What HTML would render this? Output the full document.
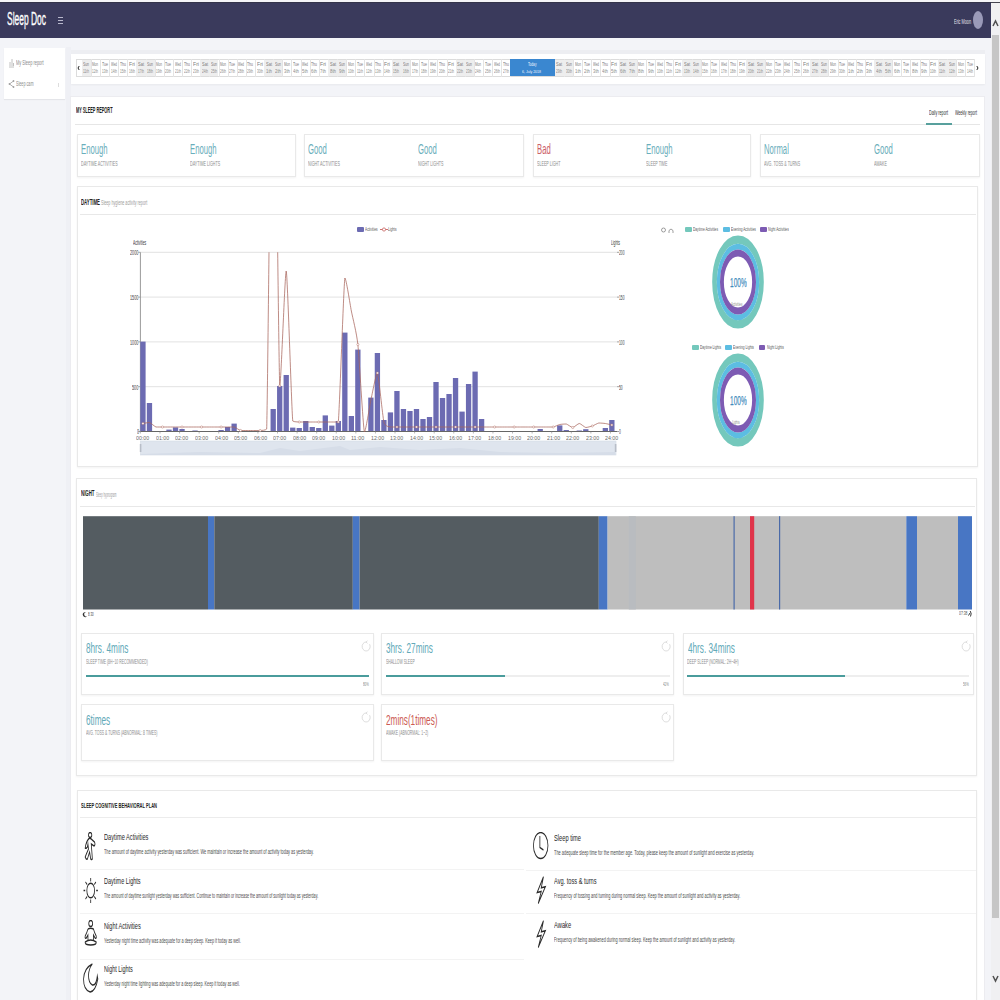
<!DOCTYPE html><html><head><meta charset="utf-8"><style>*{margin:0;padding:0}
html,body{width:1000px;height:1000px;overflow:hidden;background:#f3f4f8;font-family:"Liberation Sans",sans-serif}
.r{position:absolute}
.t{position:absolute;white-space:nowrap;line-height:1;transform-origin:0 0}
.card{position:absolute;background:#fff;border:1px solid #e9e9e9;box-sizing:border-box;box-shadow:0 1px 2px rgba(0,0,0,0.05)}
</style></head><body><div class="r" style="left:0px;top:0px;width:1000px;height:2px;background:#f4f4f7;"></div>
<div class="r" style="left:0px;top:2px;width:991px;height:36px;background:#3a3a5c;border-top:1px solid #34344a;box-sizing:border-box;"></div>
<div class="t" style="left:7.00px;top:8.76px;font-size:19.19px;color:#ffffff;font-weight:400;transform:scaleX(0.4405);-webkit-text-stroke:0.35px #fff;">Sleep Doc</div>
<div class="r" style="left:58px;top:16.5px;width:5px;height:1px;background:#b8b8cc;"></div>
<div class="r" style="left:58px;top:19.5px;width:5px;height:1px;background:#b8b8cc;"></div>
<div class="r" style="left:58px;top:22.5px;width:5px;height:1px;background:#b8b8cc;"></div>
<div class="t" style="left:954.00px;top:18.74px;font-size:6.69px;color:#e4e4ee;font-weight:400;transform:scaleX(0.5650);">Eric Moon</div>
<div class="r" style="left:973px;top:11px;width:10px;height:18px;border-radius:50%;background:#9a9ab8;"></div>
<div class="r" style="left:991px;top:2px;width:9px;height:998px;background:#f0f0f2;"></div>
<div class="r" style="left:991px;top:2px;width:9px;height:1px;background:#44444f;"></div>
<div class="r" style="left:992px;top:35px;width:7px;height:882.5px;background:#c6c6c6;"></div>
<svg class="r" style="left:991px;top:15.5px" width="9" height="14"><path d="M2 10 L4.5 5 L7 10" stroke="#505050" stroke-width="1.5" fill="none"/></svg>
<svg class="r" style="left:991px;top:972px" width="9" height="14"><path d="M2 4 L4.5 9 L7 4" stroke="#505050" stroke-width="1.5" fill="none"/></svg>
<div class="r" style="left:65.5px;top:47px;width:5px;height:953px;background:#eff0f5;"></div>
<div class="r" style="left:4px;top:48px;width:61px;height:51px;background:#ffffff;box-shadow:0 1px 1px rgba(0,0,0,0.06);"></div>
<svg class="r" style="left:8px;top:57px" width="7" height="11"><path d="M1 10 H6 M2 9 V5 M4 9 V2 M5.5 9 V6" stroke="#b0b0b0" stroke-width="0.8" fill="none"/></svg>
<div class="t" style="left:15.70px;top:59.25px;font-size:7.27px;color:#8a8a8a;font-weight:400;transform:scaleX(0.5399);">My Sleep report</div>
<svg class="r" style="left:8px;top:79px" width="7" height="10"><path d="M1.5 5 L5.5 2 M1.5 5 L5.5 8" stroke="#a0a0a0" stroke-width="0.8" fill="none"/><circle cx="1.5" cy="5" r="0.9" fill="#a0a0a0"/><circle cx="5.5" cy="2" r="0.9" fill="#a0a0a0"/><circle cx="5.5" cy="8" r="0.9" fill="#a0a0a0"/></svg>
<div class="t" style="left:16.10px;top:81.27px;font-size:7.12px;color:#8a8a8a;font-weight:400;transform:scaleX(0.5200);">Sleep cam</div>
<div class="r" style="left:58px;top:83px;width:1px;height:4px;background:#dddddd;"></div>
<div class="r" style="left:71px;top:49.5px;width:914px;height:4px;background:#edeef2;"></div>
<div class="r" style="left:71px;top:54px;width:914px;height:30px;background:#ffffff;box-shadow:0 1px 2px rgba(0,0,0,0.05);"></div>
<div class="r" style="left:76px;top:58.5px;width:898.5px;height:1px;background:#dcdcdc;"></div>
<div class="r" style="left:76px;top:75.5px;width:898.5px;height:1px;background:#dcdcdc;"></div>
<div class="r" style="left:76px;top:58.5px;width:1px;height:18.0px;background:#dcdcdc;"></div>
<div class="r" style="left:81.7px;top:58.5px;width:1px;height:18.0px;background:#dedede;"></div>
<div class="r" style="left:81.7px;top:59.5px;width:9.12px;height:16.0px;background:#eeeeee;"></div>
<div class="r" style="left:90.82px;top:58.5px;width:1px;height:18.0px;background:#e4e4e4;"></div>
<div class="t" style="left:83.30px;top:61.90px;font-size:5.67px;color:#7a7a7a;font-weight:400;transform:scaleX(0.5946);">Sun</div>
<div class="t" style="left:83.30px;top:69.17px;font-size:5.23px;color:#8a8a8a;font-weight:400;transform:scaleX(0.6132);">11th</div>
<div class="r" style="left:99.94px;top:58.5px;width:1px;height:18.0px;background:#e4e4e4;"></div>
<div class="t" style="left:92.42px;top:61.90px;font-size:5.67px;color:#7a7a7a;font-weight:400;transform:scaleX(0.5442);">Mon</div>
<div class="t" style="left:92.42px;top:69.17px;font-size:5.23px;color:#8a8a8a;font-weight:400;transform:scaleX(0.5895);">12th</div>
<div class="r" style="left:109.06px;top:58.5px;width:1px;height:18.0px;background:#e4e4e4;"></div>
<div class="t" style="left:101.54px;top:61.90px;font-size:5.67px;color:#7a7a7a;font-weight:400;transform:scaleX(0.6282);">Tue</div>
<div class="t" style="left:101.54px;top:69.17px;font-size:5.23px;color:#8a8a8a;font-weight:400;transform:scaleX(0.5895);">13th</div>
<div class="r" style="left:118.18px;top:58.5px;width:1px;height:18.0px;background:#e4e4e4;"></div>
<div class="t" style="left:110.66px;top:61.90px;font-size:5.67px;color:#7a7a7a;font-weight:400;transform:scaleX(0.5189);">Wed</div>
<div class="t" style="left:110.66px;top:69.17px;font-size:5.23px;color:#8a8a8a;font-weight:400;transform:scaleX(0.5895);">14th</div>
<div class="r" style="left:127.3px;top:58.5px;width:1px;height:18.0px;background:#e4e4e4;"></div>
<div class="t" style="left:119.78px;top:61.90px;font-size:5.67px;color:#7a7a7a;font-weight:400;transform:scaleX(0.6136);">Thu</div>
<div class="t" style="left:119.78px;top:69.17px;font-size:5.23px;color:#8a8a8a;font-weight:400;transform:scaleX(0.5895);">15th</div>
<div class="r" style="left:136.42px;top:58.5px;width:1px;height:18.0px;background:#e4e4e4;"></div>
<div class="t" style="left:128.90px;top:61.90px;font-size:5.67px;color:#7a7a7a;font-weight:400;transform:scaleX(0.9086);">Fri</div>
<div class="t" style="left:128.90px;top:69.17px;font-size:5.23px;color:#8a8a8a;font-weight:400;transform:scaleX(0.5895);">16th</div>
<div class="r" style="left:136.42px;top:59.5px;width:9.12px;height:16.0px;background:#eeeeee;"></div>
<div class="r" style="left:145.54px;top:58.5px;width:1px;height:18.0px;background:#e4e4e4;"></div>
<div class="t" style="left:138.02px;top:61.90px;font-size:5.67px;color:#7a7a7a;font-weight:400;transform:scaleX(0.7056);">Sat</div>
<div class="t" style="left:138.02px;top:69.17px;font-size:5.23px;color:#8a8a8a;font-weight:400;transform:scaleX(0.5895);">17th</div>
<div class="r" style="left:145.54px;top:59.5px;width:9.12px;height:16.0px;background:#eeeeee;"></div>
<div class="r" style="left:154.66px;top:58.5px;width:1px;height:18.0px;background:#e4e4e4;"></div>
<div class="t" style="left:147.14px;top:61.90px;font-size:5.67px;color:#7a7a7a;font-weight:400;transform:scaleX(0.5946);">Sun</div>
<div class="t" style="left:147.14px;top:69.17px;font-size:5.23px;color:#8a8a8a;font-weight:400;transform:scaleX(0.5895);">18th</div>
<div class="r" style="left:163.78px;top:58.5px;width:1px;height:18.0px;background:#e4e4e4;"></div>
<div class="t" style="left:156.26px;top:61.90px;font-size:5.67px;color:#7a7a7a;font-weight:400;transform:scaleX(0.5442);">Mon</div>
<div class="t" style="left:156.26px;top:69.17px;font-size:5.23px;color:#8a8a8a;font-weight:400;transform:scaleX(0.5895);">19th</div>
<div class="r" style="left:172.9px;top:58.5px;width:1px;height:18.0px;background:#e4e4e4;"></div>
<div class="t" style="left:165.38px;top:61.90px;font-size:5.67px;color:#7a7a7a;font-weight:400;transform:scaleX(0.6282);">Tue</div>
<div class="t" style="left:165.38px;top:69.17px;font-size:5.23px;color:#8a8a8a;font-weight:400;transform:scaleX(0.5895);">20th</div>
<div class="r" style="left:182.02px;top:58.5px;width:1px;height:18.0px;background:#e4e4e4;"></div>
<div class="t" style="left:174.50px;top:61.90px;font-size:5.67px;color:#7a7a7a;font-weight:400;transform:scaleX(0.5189);">Wed</div>
<div class="t" style="left:174.50px;top:69.17px;font-size:5.23px;color:#8a8a8a;font-weight:400;transform:scaleX(0.5895);">21th</div>
<div class="r" style="left:191.14px;top:58.5px;width:1px;height:18.0px;background:#e4e4e4;"></div>
<div class="t" style="left:183.62px;top:61.90px;font-size:5.67px;color:#7a7a7a;font-weight:400;transform:scaleX(0.6136);">Thu</div>
<div class="t" style="left:183.62px;top:69.17px;font-size:5.23px;color:#8a8a8a;font-weight:400;transform:scaleX(0.5895);">22th</div>
<div class="r" style="left:200.26px;top:58.5px;width:1px;height:18.0px;background:#e4e4e4;"></div>
<div class="t" style="left:192.74px;top:61.90px;font-size:5.67px;color:#7a7a7a;font-weight:400;transform:scaleX(0.9086);">Fri</div>
<div class="t" style="left:192.74px;top:69.17px;font-size:5.23px;color:#8a8a8a;font-weight:400;transform:scaleX(0.5895);">23th</div>
<div class="r" style="left:200.26px;top:59.5px;width:9.12px;height:16.0px;background:#eeeeee;"></div>
<div class="r" style="left:209.38px;top:58.5px;width:1px;height:18.0px;background:#e4e4e4;"></div>
<div class="t" style="left:201.86px;top:61.90px;font-size:5.67px;color:#7a7a7a;font-weight:400;transform:scaleX(0.7056);">Sat</div>
<div class="t" style="left:201.86px;top:69.17px;font-size:5.23px;color:#8a8a8a;font-weight:400;transform:scaleX(0.5895);">24th</div>
<div class="r" style="left:209.38px;top:59.5px;width:9.12px;height:16.0px;background:#eeeeee;"></div>
<div class="r" style="left:218.5px;top:58.5px;width:1px;height:18.0px;background:#e4e4e4;"></div>
<div class="t" style="left:210.98px;top:61.90px;font-size:5.67px;color:#7a7a7a;font-weight:400;transform:scaleX(0.5946);">Sun</div>
<div class="t" style="left:210.98px;top:69.17px;font-size:5.23px;color:#8a8a8a;font-weight:400;transform:scaleX(0.5895);">25th</div>
<div class="r" style="left:227.62px;top:58.5px;width:1px;height:18.0px;background:#e4e4e4;"></div>
<div class="t" style="left:220.10px;top:61.90px;font-size:5.67px;color:#7a7a7a;font-weight:400;transform:scaleX(0.5442);">Mon</div>
<div class="t" style="left:220.10px;top:69.17px;font-size:5.23px;color:#8a8a8a;font-weight:400;transform:scaleX(0.5895);">26th</div>
<div class="r" style="left:236.74px;top:58.5px;width:1px;height:18.0px;background:#e4e4e4;"></div>
<div class="t" style="left:229.22px;top:61.90px;font-size:5.67px;color:#7a7a7a;font-weight:400;transform:scaleX(0.6282);">Tue</div>
<div class="t" style="left:229.22px;top:69.17px;font-size:5.23px;color:#8a8a8a;font-weight:400;transform:scaleX(0.5895);">27th</div>
<div class="r" style="left:245.86px;top:58.5px;width:1px;height:18.0px;background:#e4e4e4;"></div>
<div class="t" style="left:238.34px;top:61.90px;font-size:5.67px;color:#7a7a7a;font-weight:400;transform:scaleX(0.5189);">Wed</div>
<div class="t" style="left:238.34px;top:69.17px;font-size:5.23px;color:#8a8a8a;font-weight:400;transform:scaleX(0.5895);">28th</div>
<div class="r" style="left:254.98px;top:58.5px;width:1px;height:18.0px;background:#e4e4e4;"></div>
<div class="t" style="left:247.46px;top:61.90px;font-size:5.67px;color:#7a7a7a;font-weight:400;transform:scaleX(0.6136);">Thu</div>
<div class="t" style="left:247.46px;top:69.17px;font-size:5.23px;color:#8a8a8a;font-weight:400;transform:scaleX(0.5895);">29th</div>
<div class="r" style="left:264.1px;top:58.5px;width:1px;height:18.0px;background:#e4e4e4;"></div>
<div class="t" style="left:256.58px;top:61.90px;font-size:5.67px;color:#7a7a7a;font-weight:400;transform:scaleX(0.9086);">Fri</div>
<div class="t" style="left:256.58px;top:69.17px;font-size:5.23px;color:#8a8a8a;font-weight:400;transform:scaleX(0.5895);">30th</div>
<div class="r" style="left:264.1px;top:59.5px;width:9.12px;height:16.0px;background:#eeeeee;"></div>
<div class="r" style="left:273.22px;top:58.5px;width:1px;height:18.0px;background:#e4e4e4;"></div>
<div class="t" style="left:265.70px;top:61.90px;font-size:5.67px;color:#7a7a7a;font-weight:400;transform:scaleX(0.7056);">Sat</div>
<div class="t" style="left:265.70px;top:69.17px;font-size:5.23px;color:#8a8a8a;font-weight:400;transform:scaleX(0.8249);">1th</div>
<div class="r" style="left:273.22px;top:59.5px;width:9.12px;height:16.0px;background:#eeeeee;"></div>
<div class="r" style="left:282.34px;top:58.5px;width:1px;height:18.0px;background:#e4e4e4;"></div>
<div class="t" style="left:274.82px;top:61.90px;font-size:5.67px;color:#7a7a7a;font-weight:400;transform:scaleX(0.5946);">Sun</div>
<div class="t" style="left:274.82px;top:69.17px;font-size:5.23px;color:#8a8a8a;font-weight:400;transform:scaleX(0.8249);">2th</div>
<div class="r" style="left:291.46px;top:58.5px;width:1px;height:18.0px;background:#e4e4e4;"></div>
<div class="t" style="left:283.94px;top:61.90px;font-size:5.67px;color:#7a7a7a;font-weight:400;transform:scaleX(0.5442);">Mon</div>
<div class="t" style="left:283.94px;top:69.17px;font-size:5.23px;color:#8a8a8a;font-weight:400;transform:scaleX(0.8249);">3th</div>
<div class="r" style="left:300.58px;top:58.5px;width:1px;height:18.0px;background:#e4e4e4;"></div>
<div class="t" style="left:293.06px;top:61.90px;font-size:5.67px;color:#7a7a7a;font-weight:400;transform:scaleX(0.6282);">Tue</div>
<div class="t" style="left:293.06px;top:69.17px;font-size:5.23px;color:#8a8a8a;font-weight:400;transform:scaleX(0.8249);">4th</div>
<div class="r" style="left:309.7px;top:58.5px;width:1px;height:18.0px;background:#e4e4e4;"></div>
<div class="t" style="left:302.18px;top:61.90px;font-size:5.67px;color:#7a7a7a;font-weight:400;transform:scaleX(0.5189);">Wed</div>
<div class="t" style="left:302.18px;top:69.17px;font-size:5.23px;color:#8a8a8a;font-weight:400;transform:scaleX(0.8249);">5th</div>
<div class="r" style="left:318.82px;top:58.5px;width:1px;height:18.0px;background:#e4e4e4;"></div>
<div class="t" style="left:311.30px;top:61.90px;font-size:5.67px;color:#7a7a7a;font-weight:400;transform:scaleX(0.6136);">Thu</div>
<div class="t" style="left:311.30px;top:69.17px;font-size:5.23px;color:#8a8a8a;font-weight:400;transform:scaleX(0.8249);">6th</div>
<div class="r" style="left:327.94px;top:58.5px;width:1px;height:18.0px;background:#e4e4e4;"></div>
<div class="t" style="left:320.42px;top:61.90px;font-size:5.67px;color:#7a7a7a;font-weight:400;transform:scaleX(0.9086);">Fri</div>
<div class="t" style="left:320.42px;top:69.17px;font-size:5.23px;color:#8a8a8a;font-weight:400;transform:scaleX(0.8249);">7th</div>
<div class="r" style="left:327.94px;top:59.5px;width:9.12px;height:16.0px;background:#eeeeee;"></div>
<div class="r" style="left:337.06px;top:58.5px;width:1px;height:18.0px;background:#e4e4e4;"></div>
<div class="t" style="left:329.54px;top:61.90px;font-size:5.67px;color:#7a7a7a;font-weight:400;transform:scaleX(0.7056);">Sat</div>
<div class="t" style="left:329.54px;top:69.17px;font-size:5.23px;color:#8a8a8a;font-weight:400;transform:scaleX(0.8249);">8th</div>
<div class="r" style="left:337.06px;top:59.5px;width:9.12px;height:16.0px;background:#eeeeee;"></div>
<div class="r" style="left:346.18px;top:58.5px;width:1px;height:18.0px;background:#e4e4e4;"></div>
<div class="t" style="left:338.66px;top:61.90px;font-size:5.67px;color:#7a7a7a;font-weight:400;transform:scaleX(0.5946);">Sun</div>
<div class="t" style="left:338.66px;top:69.17px;font-size:5.23px;color:#8a8a8a;font-weight:400;transform:scaleX(0.8249);">9th</div>
<div class="r" style="left:355.3px;top:58.5px;width:1px;height:18.0px;background:#e4e4e4;"></div>
<div class="t" style="left:347.78px;top:61.90px;font-size:5.67px;color:#7a7a7a;font-weight:400;transform:scaleX(0.5442);">Mon</div>
<div class="t" style="left:347.78px;top:69.17px;font-size:5.23px;color:#8a8a8a;font-weight:400;transform:scaleX(0.5895);">10th</div>
<div class="r" style="left:364.42px;top:58.5px;width:1px;height:18.0px;background:#e4e4e4;"></div>
<div class="t" style="left:356.90px;top:61.90px;font-size:5.67px;color:#7a7a7a;font-weight:400;transform:scaleX(0.6282);">Tue</div>
<div class="t" style="left:356.90px;top:69.17px;font-size:5.23px;color:#8a8a8a;font-weight:400;transform:scaleX(0.6132);">11th</div>
<div class="r" style="left:373.54px;top:58.5px;width:1px;height:18.0px;background:#e4e4e4;"></div>
<div class="t" style="left:366.02px;top:61.90px;font-size:5.67px;color:#7a7a7a;font-weight:400;transform:scaleX(0.5189);">Wed</div>
<div class="t" style="left:366.02px;top:69.17px;font-size:5.23px;color:#8a8a8a;font-weight:400;transform:scaleX(0.5895);">12th</div>
<div class="r" style="left:382.66px;top:58.5px;width:1px;height:18.0px;background:#e4e4e4;"></div>
<div class="t" style="left:375.14px;top:61.90px;font-size:5.67px;color:#7a7a7a;font-weight:400;transform:scaleX(0.6136);">Thu</div>
<div class="t" style="left:375.14px;top:69.17px;font-size:5.23px;color:#8a8a8a;font-weight:400;transform:scaleX(0.5895);">13th</div>
<div class="r" style="left:391.78px;top:58.5px;width:1px;height:18.0px;background:#e4e4e4;"></div>
<div class="t" style="left:384.26px;top:61.90px;font-size:5.67px;color:#7a7a7a;font-weight:400;transform:scaleX(0.9086);">Fri</div>
<div class="t" style="left:384.26px;top:69.17px;font-size:5.23px;color:#8a8a8a;font-weight:400;transform:scaleX(0.5895);">14th</div>
<div class="r" style="left:391.78px;top:59.5px;width:9.12px;height:16.0px;background:#eeeeee;"></div>
<div class="r" style="left:400.9px;top:58.5px;width:1px;height:18.0px;background:#e4e4e4;"></div>
<div class="t" style="left:393.38px;top:61.90px;font-size:5.67px;color:#7a7a7a;font-weight:400;transform:scaleX(0.7056);">Sat</div>
<div class="t" style="left:393.38px;top:69.17px;font-size:5.23px;color:#8a8a8a;font-weight:400;transform:scaleX(0.5895);">15th</div>
<div class="r" style="left:400.9px;top:59.5px;width:9.12px;height:16.0px;background:#eeeeee;"></div>
<div class="r" style="left:410.02px;top:58.5px;width:1px;height:18.0px;background:#e4e4e4;"></div>
<div class="t" style="left:402.50px;top:61.90px;font-size:5.67px;color:#7a7a7a;font-weight:400;transform:scaleX(0.5946);">Sun</div>
<div class="t" style="left:402.50px;top:69.17px;font-size:5.23px;color:#8a8a8a;font-weight:400;transform:scaleX(0.5895);">16th</div>
<div class="r" style="left:419.14px;top:58.5px;width:1px;height:18.0px;background:#e4e4e4;"></div>
<div class="t" style="left:411.62px;top:61.90px;font-size:5.67px;color:#7a7a7a;font-weight:400;transform:scaleX(0.5442);">Mon</div>
<div class="t" style="left:411.62px;top:69.17px;font-size:5.23px;color:#8a8a8a;font-weight:400;transform:scaleX(0.5895);">17th</div>
<div class="r" style="left:428.26px;top:58.5px;width:1px;height:18.0px;background:#e4e4e4;"></div>
<div class="t" style="left:420.74px;top:61.90px;font-size:5.67px;color:#7a7a7a;font-weight:400;transform:scaleX(0.6282);">Tue</div>
<div class="t" style="left:420.74px;top:69.17px;font-size:5.23px;color:#8a8a8a;font-weight:400;transform:scaleX(0.5895);">18th</div>
<div class="r" style="left:437.38px;top:58.5px;width:1px;height:18.0px;background:#e4e4e4;"></div>
<div class="t" style="left:429.86px;top:61.90px;font-size:5.67px;color:#7a7a7a;font-weight:400;transform:scaleX(0.5189);">Wed</div>
<div class="t" style="left:429.86px;top:69.17px;font-size:5.23px;color:#8a8a8a;font-weight:400;transform:scaleX(0.5895);">19th</div>
<div class="r" style="left:446.5px;top:58.5px;width:1px;height:18.0px;background:#e4e4e4;"></div>
<div class="t" style="left:438.98px;top:61.90px;font-size:5.67px;color:#7a7a7a;font-weight:400;transform:scaleX(0.6136);">Thu</div>
<div class="t" style="left:438.98px;top:69.17px;font-size:5.23px;color:#8a8a8a;font-weight:400;transform:scaleX(0.5895);">20th</div>
<div class="r" style="left:455.62px;top:58.5px;width:1px;height:18.0px;background:#e4e4e4;"></div>
<div class="t" style="left:448.10px;top:61.90px;font-size:5.67px;color:#7a7a7a;font-weight:400;transform:scaleX(0.9086);">Fri</div>
<div class="t" style="left:448.10px;top:69.17px;font-size:5.23px;color:#8a8a8a;font-weight:400;transform:scaleX(0.5895);">21th</div>
<div class="r" style="left:455.62px;top:59.5px;width:9.12px;height:16.0px;background:#eeeeee;"></div>
<div class="r" style="left:464.74px;top:58.5px;width:1px;height:18.0px;background:#e4e4e4;"></div>
<div class="t" style="left:457.22px;top:61.90px;font-size:5.67px;color:#7a7a7a;font-weight:400;transform:scaleX(0.7056);">Sat</div>
<div class="t" style="left:457.22px;top:69.17px;font-size:5.23px;color:#8a8a8a;font-weight:400;transform:scaleX(0.5895);">22th</div>
<div class="r" style="left:464.74px;top:59.5px;width:9.12px;height:16.0px;background:#eeeeee;"></div>
<div class="r" style="left:473.86px;top:58.5px;width:1px;height:18.0px;background:#e4e4e4;"></div>
<div class="t" style="left:466.34px;top:61.90px;font-size:5.67px;color:#7a7a7a;font-weight:400;transform:scaleX(0.5946);">Sun</div>
<div class="t" style="left:466.34px;top:69.17px;font-size:5.23px;color:#8a8a8a;font-weight:400;transform:scaleX(0.5895);">23th</div>
<div class="r" style="left:482.98px;top:58.5px;width:1px;height:18.0px;background:#e4e4e4;"></div>
<div class="t" style="left:475.46px;top:61.90px;font-size:5.67px;color:#7a7a7a;font-weight:400;transform:scaleX(0.5442);">Mon</div>
<div class="t" style="left:475.46px;top:69.17px;font-size:5.23px;color:#8a8a8a;font-weight:400;transform:scaleX(0.5895);">24th</div>
<div class="r" style="left:492.1px;top:58.5px;width:1px;height:18.0px;background:#e4e4e4;"></div>
<div class="t" style="left:484.58px;top:61.90px;font-size:5.67px;color:#7a7a7a;font-weight:400;transform:scaleX(0.6282);">Tue</div>
<div class="t" style="left:484.58px;top:69.17px;font-size:5.23px;color:#8a8a8a;font-weight:400;transform:scaleX(0.5895);">25th</div>
<div class="r" style="left:501.22px;top:58.5px;width:1px;height:18.0px;background:#e4e4e4;"></div>
<div class="t" style="left:493.70px;top:61.90px;font-size:5.67px;color:#7a7a7a;font-weight:400;transform:scaleX(0.5189);">Wed</div>
<div class="t" style="left:493.70px;top:69.17px;font-size:5.23px;color:#8a8a8a;font-weight:400;transform:scaleX(0.5895);">26th</div>
<div class="r" style="left:510.34px;top:58.5px;width:1px;height:18.0px;background:#e4e4e4;"></div>
<div class="t" style="left:502.82px;top:61.90px;font-size:5.67px;color:#7a7a7a;font-weight:400;transform:scaleX(0.6136);">Thu</div>
<div class="t" style="left:502.82px;top:69.17px;font-size:5.23px;color:#8a8a8a;font-weight:400;transform:scaleX(0.5895);">27th</div>
<svg class="r" style="left:76px;top:65px" width="5" height="6"><path d="M3.2 1 L2 3 L3.2 5" fill="none" stroke="#222" stroke-width="1"/></svg>
<div class="r" style="left:510px;top:59px;width:44.8px;height:17px;background:#3a87d0;"></div>
<div class="t" style="left:528.00px;top:62.66px;font-size:4.65px;color:#f0f6ff;font-weight:400;transform:scaleX(0.6845);">Today</div>
<div class="t" style="left:522.00px;top:69.71px;font-size:4.36px;color:#f0f6ff;font-weight:400;transform:scaleX(0.8077);">6, July 2018</div>
<div class="r" style="left:554.8px;top:59.5px;width:9.12px;height:16.0px;background:#eeeeee;"></div>
<div class="r" style="left:563.92px;top:58.5px;width:1px;height:18.0px;background:#e4e4e4;"></div>
<div class="t" style="left:556.40px;top:61.90px;font-size:5.67px;color:#7a7a7a;font-weight:400;transform:scaleX(0.7056);">Sat</div>
<div class="t" style="left:556.40px;top:69.17px;font-size:5.23px;color:#8a8a8a;font-weight:400;transform:scaleX(0.5895);">29th</div>
<div class="r" style="left:563.92px;top:59.5px;width:9.12px;height:16.0px;background:#eeeeee;"></div>
<div class="r" style="left:573.04px;top:58.5px;width:1px;height:18.0px;background:#e4e4e4;"></div>
<div class="t" style="left:565.52px;top:61.90px;font-size:5.67px;color:#7a7a7a;font-weight:400;transform:scaleX(0.5946);">Sun</div>
<div class="t" style="left:565.52px;top:69.17px;font-size:5.23px;color:#8a8a8a;font-weight:400;transform:scaleX(0.5895);">30th</div>
<div class="r" style="left:582.16px;top:58.5px;width:1px;height:18.0px;background:#e4e4e4;"></div>
<div class="t" style="left:574.64px;top:61.90px;font-size:5.67px;color:#7a7a7a;font-weight:400;transform:scaleX(0.5442);">Mon</div>
<div class="t" style="left:574.64px;top:69.17px;font-size:5.23px;color:#8a8a8a;font-weight:400;transform:scaleX(0.8249);">1th</div>
<div class="r" style="left:591.28px;top:58.5px;width:1px;height:18.0px;background:#e4e4e4;"></div>
<div class="t" style="left:583.76px;top:61.90px;font-size:5.67px;color:#7a7a7a;font-weight:400;transform:scaleX(0.6282);">Tue</div>
<div class="t" style="left:583.76px;top:69.17px;font-size:5.23px;color:#8a8a8a;font-weight:400;transform:scaleX(0.8249);">2th</div>
<div class="r" style="left:600.4px;top:58.5px;width:1px;height:18.0px;background:#e4e4e4;"></div>
<div class="t" style="left:592.88px;top:61.90px;font-size:5.67px;color:#7a7a7a;font-weight:400;transform:scaleX(0.5189);">Wed</div>
<div class="t" style="left:592.88px;top:69.17px;font-size:5.23px;color:#8a8a8a;font-weight:400;transform:scaleX(0.8249);">3th</div>
<div class="r" style="left:609.52px;top:58.5px;width:1px;height:18.0px;background:#e4e4e4;"></div>
<div class="t" style="left:602.00px;top:61.90px;font-size:5.67px;color:#7a7a7a;font-weight:400;transform:scaleX(0.6136);">Thu</div>
<div class="t" style="left:602.00px;top:69.17px;font-size:5.23px;color:#8a8a8a;font-weight:400;transform:scaleX(0.8249);">4th</div>
<div class="r" style="left:618.64px;top:58.5px;width:1px;height:18.0px;background:#e4e4e4;"></div>
<div class="t" style="left:611.12px;top:61.90px;font-size:5.67px;color:#7a7a7a;font-weight:400;transform:scaleX(0.9086);">Fri</div>
<div class="t" style="left:611.12px;top:69.17px;font-size:5.23px;color:#8a8a8a;font-weight:400;transform:scaleX(0.8249);">5th</div>
<div class="r" style="left:618.64px;top:59.5px;width:9.12px;height:16.0px;background:#eeeeee;"></div>
<div class="r" style="left:627.76px;top:58.5px;width:1px;height:18.0px;background:#e4e4e4;"></div>
<div class="t" style="left:620.24px;top:61.90px;font-size:5.67px;color:#7a7a7a;font-weight:400;transform:scaleX(0.7056);">Sat</div>
<div class="t" style="left:620.24px;top:69.17px;font-size:5.23px;color:#8a8a8a;font-weight:400;transform:scaleX(0.8249);">6th</div>
<div class="r" style="left:627.76px;top:59.5px;width:9.12px;height:16.0px;background:#eeeeee;"></div>
<div class="r" style="left:636.88px;top:58.5px;width:1px;height:18.0px;background:#e4e4e4;"></div>
<div class="t" style="left:629.36px;top:61.90px;font-size:5.67px;color:#7a7a7a;font-weight:400;transform:scaleX(0.5946);">Sun</div>
<div class="t" style="left:629.36px;top:69.17px;font-size:5.23px;color:#8a8a8a;font-weight:400;transform:scaleX(0.8249);">7th</div>
<div class="r" style="left:646.0px;top:58.5px;width:1px;height:18.0px;background:#e4e4e4;"></div>
<div class="t" style="left:638.48px;top:61.90px;font-size:5.67px;color:#7a7a7a;font-weight:400;transform:scaleX(0.5442);">Mon</div>
<div class="t" style="left:638.48px;top:69.17px;font-size:5.23px;color:#8a8a8a;font-weight:400;transform:scaleX(0.8249);">8th</div>
<div class="r" style="left:655.12px;top:58.5px;width:1px;height:18.0px;background:#e4e4e4;"></div>
<div class="t" style="left:647.60px;top:61.90px;font-size:5.67px;color:#7a7a7a;font-weight:400;transform:scaleX(0.6282);">Tue</div>
<div class="t" style="left:647.60px;top:69.17px;font-size:5.23px;color:#8a8a8a;font-weight:400;transform:scaleX(0.8249);">9th</div>
<div class="r" style="left:664.24px;top:58.5px;width:1px;height:18.0px;background:#e4e4e4;"></div>
<div class="t" style="left:656.72px;top:61.90px;font-size:5.67px;color:#7a7a7a;font-weight:400;transform:scaleX(0.5189);">Wed</div>
<div class="t" style="left:656.72px;top:69.17px;font-size:5.23px;color:#8a8a8a;font-weight:400;transform:scaleX(0.5895);">10th</div>
<div class="r" style="left:673.36px;top:58.5px;width:1px;height:18.0px;background:#e4e4e4;"></div>
<div class="t" style="left:665.84px;top:61.90px;font-size:5.67px;color:#7a7a7a;font-weight:400;transform:scaleX(0.6136);">Thu</div>
<div class="t" style="left:665.84px;top:69.17px;font-size:5.23px;color:#8a8a8a;font-weight:400;transform:scaleX(0.6132);">11th</div>
<div class="r" style="left:682.48px;top:58.5px;width:1px;height:18.0px;background:#e4e4e4;"></div>
<div class="t" style="left:674.96px;top:61.90px;font-size:5.67px;color:#7a7a7a;font-weight:400;transform:scaleX(0.9086);">Fri</div>
<div class="t" style="left:674.96px;top:69.17px;font-size:5.23px;color:#8a8a8a;font-weight:400;transform:scaleX(0.5895);">12th</div>
<div class="r" style="left:682.48px;top:59.5px;width:9.12px;height:16.0px;background:#eeeeee;"></div>
<div class="r" style="left:691.6px;top:58.5px;width:1px;height:18.0px;background:#e4e4e4;"></div>
<div class="t" style="left:684.08px;top:61.90px;font-size:5.67px;color:#7a7a7a;font-weight:400;transform:scaleX(0.7056);">Sat</div>
<div class="t" style="left:684.08px;top:69.17px;font-size:5.23px;color:#8a8a8a;font-weight:400;transform:scaleX(0.5895);">13th</div>
<div class="r" style="left:691.6px;top:59.5px;width:9.12px;height:16.0px;background:#eeeeee;"></div>
<div class="r" style="left:700.72px;top:58.5px;width:1px;height:18.0px;background:#e4e4e4;"></div>
<div class="t" style="left:693.20px;top:61.90px;font-size:5.67px;color:#7a7a7a;font-weight:400;transform:scaleX(0.5946);">Sun</div>
<div class="t" style="left:693.20px;top:69.17px;font-size:5.23px;color:#8a8a8a;font-weight:400;transform:scaleX(0.5895);">14th</div>
<div class="r" style="left:709.84px;top:58.5px;width:1px;height:18.0px;background:#e4e4e4;"></div>
<div class="t" style="left:702.32px;top:61.90px;font-size:5.67px;color:#7a7a7a;font-weight:400;transform:scaleX(0.5442);">Mon</div>
<div class="t" style="left:702.32px;top:69.17px;font-size:5.23px;color:#8a8a8a;font-weight:400;transform:scaleX(0.5895);">15th</div>
<div class="r" style="left:718.96px;top:58.5px;width:1px;height:18.0px;background:#e4e4e4;"></div>
<div class="t" style="left:711.44px;top:61.90px;font-size:5.67px;color:#7a7a7a;font-weight:400;transform:scaleX(0.6282);">Tue</div>
<div class="t" style="left:711.44px;top:69.17px;font-size:5.23px;color:#8a8a8a;font-weight:400;transform:scaleX(0.5895);">16th</div>
<div class="r" style="left:728.08px;top:58.5px;width:1px;height:18.0px;background:#e4e4e4;"></div>
<div class="t" style="left:720.56px;top:61.90px;font-size:5.67px;color:#7a7a7a;font-weight:400;transform:scaleX(0.5189);">Wed</div>
<div class="t" style="left:720.56px;top:69.17px;font-size:5.23px;color:#8a8a8a;font-weight:400;transform:scaleX(0.5895);">17th</div>
<div class="r" style="left:737.2px;top:58.5px;width:1px;height:18.0px;background:#e4e4e4;"></div>
<div class="t" style="left:729.68px;top:61.90px;font-size:5.67px;color:#7a7a7a;font-weight:400;transform:scaleX(0.6136);">Thu</div>
<div class="t" style="left:729.68px;top:69.17px;font-size:5.23px;color:#8a8a8a;font-weight:400;transform:scaleX(0.5895);">18th</div>
<div class="r" style="left:746.32px;top:58.5px;width:1px;height:18.0px;background:#e4e4e4;"></div>
<div class="t" style="left:738.80px;top:61.90px;font-size:5.67px;color:#7a7a7a;font-weight:400;transform:scaleX(0.9086);">Fri</div>
<div class="t" style="left:738.80px;top:69.17px;font-size:5.23px;color:#8a8a8a;font-weight:400;transform:scaleX(0.5895);">19th</div>
<div class="r" style="left:746.32px;top:59.5px;width:9.12px;height:16.0px;background:#eeeeee;"></div>
<div class="r" style="left:755.44px;top:58.5px;width:1px;height:18.0px;background:#e4e4e4;"></div>
<div class="t" style="left:747.92px;top:61.90px;font-size:5.67px;color:#7a7a7a;font-weight:400;transform:scaleX(0.7056);">Sat</div>
<div class="t" style="left:747.92px;top:69.17px;font-size:5.23px;color:#8a8a8a;font-weight:400;transform:scaleX(0.5895);">20th</div>
<div class="r" style="left:755.44px;top:59.5px;width:9.12px;height:16.0px;background:#eeeeee;"></div>
<div class="r" style="left:764.56px;top:58.5px;width:1px;height:18.0px;background:#e4e4e4;"></div>
<div class="t" style="left:757.04px;top:61.90px;font-size:5.67px;color:#7a7a7a;font-weight:400;transform:scaleX(0.5946);">Sun</div>
<div class="t" style="left:757.04px;top:69.17px;font-size:5.23px;color:#8a8a8a;font-weight:400;transform:scaleX(0.5895);">21th</div>
<div class="r" style="left:773.68px;top:58.5px;width:1px;height:18.0px;background:#e4e4e4;"></div>
<div class="t" style="left:766.16px;top:61.90px;font-size:5.67px;color:#7a7a7a;font-weight:400;transform:scaleX(0.5442);">Mon</div>
<div class="t" style="left:766.16px;top:69.17px;font-size:5.23px;color:#8a8a8a;font-weight:400;transform:scaleX(0.5895);">22th</div>
<div class="r" style="left:782.8px;top:58.5px;width:1px;height:18.0px;background:#e4e4e4;"></div>
<div class="t" style="left:775.28px;top:61.90px;font-size:5.67px;color:#7a7a7a;font-weight:400;transform:scaleX(0.6282);">Tue</div>
<div class="t" style="left:775.28px;top:69.17px;font-size:5.23px;color:#8a8a8a;font-weight:400;transform:scaleX(0.5895);">23th</div>
<div class="r" style="left:791.92px;top:58.5px;width:1px;height:18.0px;background:#e4e4e4;"></div>
<div class="t" style="left:784.40px;top:61.90px;font-size:5.67px;color:#7a7a7a;font-weight:400;transform:scaleX(0.5189);">Wed</div>
<div class="t" style="left:784.40px;top:69.17px;font-size:5.23px;color:#8a8a8a;font-weight:400;transform:scaleX(0.5895);">24th</div>
<div class="r" style="left:801.04px;top:58.5px;width:1px;height:18.0px;background:#e4e4e4;"></div>
<div class="t" style="left:793.52px;top:61.90px;font-size:5.67px;color:#7a7a7a;font-weight:400;transform:scaleX(0.6136);">Thu</div>
<div class="t" style="left:793.52px;top:69.17px;font-size:5.23px;color:#8a8a8a;font-weight:400;transform:scaleX(0.5895);">25th</div>
<div class="r" style="left:810.16px;top:58.5px;width:1px;height:18.0px;background:#e4e4e4;"></div>
<div class="t" style="left:802.64px;top:61.90px;font-size:5.67px;color:#7a7a7a;font-weight:400;transform:scaleX(0.9086);">Fri</div>
<div class="t" style="left:802.64px;top:69.17px;font-size:5.23px;color:#8a8a8a;font-weight:400;transform:scaleX(0.5895);">26th</div>
<div class="r" style="left:810.16px;top:59.5px;width:9.12px;height:16.0px;background:#eeeeee;"></div>
<div class="r" style="left:819.28px;top:58.5px;width:1px;height:18.0px;background:#e4e4e4;"></div>
<div class="t" style="left:811.76px;top:61.90px;font-size:5.67px;color:#7a7a7a;font-weight:400;transform:scaleX(0.7056);">Sat</div>
<div class="t" style="left:811.76px;top:69.17px;font-size:5.23px;color:#8a8a8a;font-weight:400;transform:scaleX(0.5895);">27th</div>
<div class="r" style="left:819.28px;top:59.5px;width:9.12px;height:16.0px;background:#eeeeee;"></div>
<div class="r" style="left:828.4px;top:58.5px;width:1px;height:18.0px;background:#e4e4e4;"></div>
<div class="t" style="left:820.88px;top:61.90px;font-size:5.67px;color:#7a7a7a;font-weight:400;transform:scaleX(0.5946);">Sun</div>
<div class="t" style="left:820.88px;top:69.17px;font-size:5.23px;color:#8a8a8a;font-weight:400;transform:scaleX(0.5895);">28th</div>
<div class="r" style="left:837.52px;top:58.5px;width:1px;height:18.0px;background:#e4e4e4;"></div>
<div class="t" style="left:830.00px;top:61.90px;font-size:5.67px;color:#7a7a7a;font-weight:400;transform:scaleX(0.5442);">Mon</div>
<div class="t" style="left:830.00px;top:69.17px;font-size:5.23px;color:#8a8a8a;font-weight:400;transform:scaleX(0.5895);">29th</div>
<div class="r" style="left:846.64px;top:58.5px;width:1px;height:18.0px;background:#e4e4e4;"></div>
<div class="t" style="left:839.12px;top:61.90px;font-size:5.67px;color:#7a7a7a;font-weight:400;transform:scaleX(0.6282);">Tue</div>
<div class="t" style="left:839.12px;top:69.17px;font-size:5.23px;color:#8a8a8a;font-weight:400;transform:scaleX(0.5895);">30th</div>
<div class="r" style="left:855.76px;top:58.5px;width:1px;height:18.0px;background:#e4e4e4;"></div>
<div class="t" style="left:848.24px;top:61.90px;font-size:5.67px;color:#7a7a7a;font-weight:400;transform:scaleX(0.5189);">Wed</div>
<div class="t" style="left:848.24px;top:69.17px;font-size:5.23px;color:#8a8a8a;font-weight:400;transform:scaleX(0.8249);">1th</div>
<div class="r" style="left:864.88px;top:58.5px;width:1px;height:18.0px;background:#e4e4e4;"></div>
<div class="t" style="left:857.36px;top:61.90px;font-size:5.67px;color:#7a7a7a;font-weight:400;transform:scaleX(0.6136);">Thu</div>
<div class="t" style="left:857.36px;top:69.17px;font-size:5.23px;color:#8a8a8a;font-weight:400;transform:scaleX(0.8249);">2th</div>
<div class="r" style="left:874.0px;top:58.5px;width:1px;height:18.0px;background:#e4e4e4;"></div>
<div class="t" style="left:866.48px;top:61.90px;font-size:5.67px;color:#7a7a7a;font-weight:400;transform:scaleX(0.9086);">Fri</div>
<div class="t" style="left:866.48px;top:69.17px;font-size:5.23px;color:#8a8a8a;font-weight:400;transform:scaleX(0.8249);">3th</div>
<div class="r" style="left:874.0px;top:59.5px;width:9.12px;height:16.0px;background:#eeeeee;"></div>
<div class="r" style="left:883.12px;top:58.5px;width:1px;height:18.0px;background:#e4e4e4;"></div>
<div class="t" style="left:875.60px;top:61.90px;font-size:5.67px;color:#7a7a7a;font-weight:400;transform:scaleX(0.7056);">Sat</div>
<div class="t" style="left:875.60px;top:69.17px;font-size:5.23px;color:#8a8a8a;font-weight:400;transform:scaleX(0.8249);">4th</div>
<div class="r" style="left:883.12px;top:59.5px;width:9.12px;height:16.0px;background:#eeeeee;"></div>
<div class="r" style="left:892.24px;top:58.5px;width:1px;height:18.0px;background:#e4e4e4;"></div>
<div class="t" style="left:884.72px;top:61.90px;font-size:5.67px;color:#7a7a7a;font-weight:400;transform:scaleX(0.5946);">Sun</div>
<div class="t" style="left:884.72px;top:69.17px;font-size:5.23px;color:#8a8a8a;font-weight:400;transform:scaleX(0.8249);">5th</div>
<div class="r" style="left:901.36px;top:58.5px;width:1px;height:18.0px;background:#e4e4e4;"></div>
<div class="t" style="left:893.84px;top:61.90px;font-size:5.67px;color:#7a7a7a;font-weight:400;transform:scaleX(0.5442);">Mon</div>
<div class="t" style="left:893.84px;top:69.17px;font-size:5.23px;color:#8a8a8a;font-weight:400;transform:scaleX(0.8249);">6th</div>
<div class="r" style="left:910.48px;top:58.5px;width:1px;height:18.0px;background:#e4e4e4;"></div>
<div class="t" style="left:902.96px;top:61.90px;font-size:5.67px;color:#7a7a7a;font-weight:400;transform:scaleX(0.6282);">Tue</div>
<div class="t" style="left:902.96px;top:69.17px;font-size:5.23px;color:#8a8a8a;font-weight:400;transform:scaleX(0.8249);">7th</div>
<div class="r" style="left:919.6px;top:58.5px;width:1px;height:18.0px;background:#e4e4e4;"></div>
<div class="t" style="left:912.08px;top:61.90px;font-size:5.67px;color:#7a7a7a;font-weight:400;transform:scaleX(0.5189);">Wed</div>
<div class="t" style="left:912.08px;top:69.17px;font-size:5.23px;color:#8a8a8a;font-weight:400;transform:scaleX(0.8249);">8th</div>
<div class="r" style="left:928.72px;top:58.5px;width:1px;height:18.0px;background:#e4e4e4;"></div>
<div class="t" style="left:921.20px;top:61.90px;font-size:5.67px;color:#7a7a7a;font-weight:400;transform:scaleX(0.6136);">Thu</div>
<div class="t" style="left:921.20px;top:69.17px;font-size:5.23px;color:#8a8a8a;font-weight:400;transform:scaleX(0.8249);">9th</div>
<div class="r" style="left:937.84px;top:58.5px;width:1px;height:18.0px;background:#e4e4e4;"></div>
<div class="t" style="left:930.32px;top:61.90px;font-size:5.67px;color:#7a7a7a;font-weight:400;transform:scaleX(0.9086);">Fri</div>
<div class="t" style="left:930.32px;top:69.17px;font-size:5.23px;color:#8a8a8a;font-weight:400;transform:scaleX(0.5895);">10th</div>
<div class="r" style="left:937.84px;top:59.5px;width:9.12px;height:16.0px;background:#eeeeee;"></div>
<div class="r" style="left:946.96px;top:58.5px;width:1px;height:18.0px;background:#e4e4e4;"></div>
<div class="t" style="left:939.44px;top:61.90px;font-size:5.67px;color:#7a7a7a;font-weight:400;transform:scaleX(0.7056);">Sat</div>
<div class="t" style="left:939.44px;top:69.17px;font-size:5.23px;color:#8a8a8a;font-weight:400;transform:scaleX(0.6132);">11th</div>
<div class="r" style="left:946.96px;top:59.5px;width:9.12px;height:16.0px;background:#eeeeee;"></div>
<div class="r" style="left:956.08px;top:58.5px;width:1px;height:18.0px;background:#e4e4e4;"></div>
<div class="t" style="left:948.56px;top:61.90px;font-size:5.67px;color:#7a7a7a;font-weight:400;transform:scaleX(0.5946);">Sun</div>
<div class="t" style="left:948.56px;top:69.17px;font-size:5.23px;color:#8a8a8a;font-weight:400;transform:scaleX(0.5895);">12th</div>
<div class="r" style="left:965.2px;top:58.5px;width:1px;height:18.0px;background:#e4e4e4;"></div>
<div class="t" style="left:957.68px;top:61.90px;font-size:5.67px;color:#7a7a7a;font-weight:400;transform:scaleX(0.5442);">Mon</div>
<div class="t" style="left:957.68px;top:69.17px;font-size:5.23px;color:#8a8a8a;font-weight:400;transform:scaleX(0.5895);">13th</div>
<div class="r" style="left:974.32px;top:58.5px;width:1px;height:18.0px;background:#e4e4e4;"></div>
<div class="t" style="left:966.80px;top:61.90px;font-size:5.67px;color:#7a7a7a;font-weight:400;transform:scaleX(0.6282);">Tue</div>
<div class="t" style="left:966.80px;top:69.17px;font-size:5.23px;color:#8a8a8a;font-weight:400;transform:scaleX(0.5895);">14th</div>
<svg class="r" style="left:975px;top:65px" width="5" height="6"><path d="M1.8 1 L3 3 L1.8 5" fill="none" stroke="#222" stroke-width="1"/></svg>
<div class="r" style="left:70px;top:96px;width:915px;height:910px;background:#fff;border:1px solid #ececf0;box-sizing:border-box;"></div>
<div class="t" style="left:76.00px;top:107.39px;font-size:8.28px;color:#222222;font-weight:700;transform:scaleX(0.4667);">MY SLEEP REPORT</div>
<div class="r" style="left:75px;top:124px;width:905px;height:1px;background:#e6e6e6;"></div>
<div class="t" style="left:929.00px;top:109.49px;font-size:6.98px;color:#2e2e2e;font-weight:400;transform:scaleX(0.5324);">Daily report</div>
<div class="t" style="left:955.00px;top:109.49px;font-size:6.98px;color:#2e2e2e;font-weight:400;transform:scaleX(0.5127);">Weekly report</div>
<div class="r" style="left:926px;top:123px;width:26px;height:2px;background:#58a09d;"></div>
<div class="card" style="left:76.5px;top:134px;width:219.10000000000002px;height:42.5px;"></div>
<div class="t" style="left:80.80px;top:142.59px;font-size:13.95px;color:#6aaebb;font-weight:400;transform:scaleX(0.5530);">Enough</div>
<div class="t" style="left:80.80px;top:160.84px;font-size:6.69px;color:#8c8c8c;font-weight:400;transform:scaleX(0.5450);">DAYTIME ACTIVITIES</div>
<div class="t" style="left:190.30px;top:142.59px;font-size:13.95px;color:#6aaebb;font-weight:400;transform:scaleX(0.5530);">Enough</div>
<div class="t" style="left:190.30px;top:160.84px;font-size:6.69px;color:#8c8c8c;font-weight:400;transform:scaleX(0.5450);">DAYTIME LIGHTS</div>
<div class="card" style="left:303.7px;top:134px;width:220.3px;height:42.5px;"></div>
<div class="t" style="left:308.00px;top:142.59px;font-size:13.95px;color:#6aaebb;font-weight:400;transform:scaleX(0.5530);">Good</div>
<div class="t" style="left:308.00px;top:160.84px;font-size:6.69px;color:#8c8c8c;font-weight:400;transform:scaleX(0.5450);">NIGHT ACTIVITIES</div>
<div class="t" style="left:417.50px;top:142.59px;font-size:13.95px;color:#6aaebb;font-weight:400;transform:scaleX(0.5530);">Good</div>
<div class="t" style="left:417.50px;top:160.84px;font-size:6.69px;color:#8c8c8c;font-weight:400;transform:scaleX(0.5450);">NIGHT LIGHTS</div>
<div class="card" style="left:532.5px;top:134px;width:218.89999999999998px;height:42.5px;"></div>
<div class="t" style="left:536.80px;top:142.59px;font-size:13.95px;color:#cc6068;font-weight:400;transform:scaleX(0.5530);">Bad</div>
<div class="t" style="left:536.80px;top:160.84px;font-size:6.69px;color:#8c8c8c;font-weight:400;transform:scaleX(0.5450);">SLEEP LIGHT</div>
<div class="t" style="left:646.30px;top:142.59px;font-size:13.95px;color:#6aaebb;font-weight:400;transform:scaleX(0.5530);">Enough</div>
<div class="t" style="left:646.30px;top:160.84px;font-size:6.69px;color:#8c8c8c;font-weight:400;transform:scaleX(0.5450);">SLEEP TIME</div>
<div class="card" style="left:759.8px;top:134px;width:220.20000000000005px;height:42.5px;"></div>
<div class="t" style="left:764.10px;top:142.59px;font-size:13.95px;color:#6aaebb;font-weight:400;transform:scaleX(0.5530);">Normal</div>
<div class="t" style="left:764.10px;top:160.84px;font-size:6.69px;color:#8c8c8c;font-weight:400;transform:scaleX(0.5450);">AVG. TOSS & TURNS</div>
<div class="t" style="left:873.60px;top:142.59px;font-size:13.95px;color:#6aaebb;font-weight:400;transform:scaleX(0.5530);">Good</div>
<div class="t" style="left:873.60px;top:160.84px;font-size:6.69px;color:#8c8c8c;font-weight:400;transform:scaleX(0.5450);">AWAKE</div>
<div class="card" style="left:76.5px;top:185.5px;width:901.0px;height:281.0px;"></div>
<div class="t" style="left:81.00px;top:198.81px;font-size:8.14px;color:#222222;font-weight:700;transform:scaleX(0.5293);">DAYTIME</div>
<div class="t" style="left:101.00px;top:199.54px;font-size:6.69px;color:#9a9a9a;font-weight:400;transform:scaleX(0.5500);">Sleep hygiene activity report</div>
<div class="r" style="left:80px;top:214px;width:896px;height:1px;background:#e8e8e8;"></div>
<div class="r" style="left:357.2px;top:226.8px;width:6.6px;height:5.2px;background:#6c6bb2;border-radius:1px;"></div>
<div class="t" style="left:365.00px;top:227.18px;font-size:5.81px;color:#555555;font-weight:400;transform:scaleX(0.5500);">Activities</div>
<svg class="r" style="left:380px;top:226px" width="8" height="7"><path d="M0 3.5 H8" stroke="#c0504d" stroke-width="0.8"/><circle cx="4" cy="3.5" r="1.6" fill="#fff" stroke="#c0504d" stroke-width="0.7"/></svg>
<div class="t" style="left:388.00px;top:227.18px;font-size:5.81px;color:#555555;font-weight:400;transform:scaleX(0.5500);">Lights</div>
<div class="t" style="left:133.00px;top:240.04px;font-size:6.69px;color:#333333;font-weight:400;transform:scaleX(0.5000);">Activities</div>
<div class="t" style="left:611.00px;top:240.04px;font-size:6.69px;color:#333333;font-weight:400;transform:scaleX(0.5000);">Lights</div>
<svg class="r" style="left:0px;top:0px" width="1000" height="1000" viewBox="0 0 1000 1000"><line x1="140.4" y1="252.30" x2="617.0" y2="252.30" stroke="#e2e2e2" stroke-width="1"/><line x1="138.4" y1="252.30" x2="140.4" y2="252.30" stroke="#888" stroke-width="0.8"/><line x1="617.0" y1="252.30" x2="619.0" y2="252.30" stroke="#888" stroke-width="0.8"/><line x1="140.4" y1="297.10" x2="617.0" y2="297.10" stroke="#e2e2e2" stroke-width="1"/><line x1="138.4" y1="297.10" x2="140.4" y2="297.10" stroke="#888" stroke-width="0.8"/><line x1="617.0" y1="297.10" x2="619.0" y2="297.10" stroke="#888" stroke-width="0.8"/><line x1="140.4" y1="341.90" x2="617.0" y2="341.90" stroke="#e2e2e2" stroke-width="1"/><line x1="138.4" y1="341.90" x2="140.4" y2="341.90" stroke="#888" stroke-width="0.8"/><line x1="617.0" y1="341.90" x2="619.0" y2="341.90" stroke="#888" stroke-width="0.8"/><line x1="140.4" y1="386.70" x2="617.0" y2="386.70" stroke="#e2e2e2" stroke-width="1"/><line x1="138.4" y1="386.70" x2="140.4" y2="386.70" stroke="#888" stroke-width="0.8"/><line x1="617.0" y1="386.70" x2="619.0" y2="386.70" stroke="#888" stroke-width="0.8"/><line x1="138.4" y1="431.50" x2="140.4" y2="431.50" stroke="#888" stroke-width="0.8"/><line x1="617.0" y1="431.50" x2="619.0" y2="431.50" stroke="#888" stroke-width="0.8"/><line x1="140.4" y1="252.3" x2="140.4" y2="431.5" stroke="#9a9a9a" stroke-width="1"/><rect x="140.30" y="341.6" width="5.3" height="89.90" fill="#6c6bb2"/><rect x="146.81" y="403" width="5.3" height="28.50" fill="#6c6bb2"/><rect x="166.35" y="429.6" width="5.3" height="1.90" fill="#6c6bb2"/><rect x="172.86" y="427.4" width="5.3" height="4.10" fill="#6c6bb2"/><rect x="179.38" y="429" width="5.3" height="2.50" fill="#6c6bb2"/><rect x="192.40" y="430.5" width="5.3" height="1.00" fill="#6c6bb2"/><rect x="218.45" y="430" width="5.3" height="1.50" fill="#6c6bb2"/><rect x="224.96" y="427" width="5.3" height="4.50" fill="#6c6bb2"/><rect x="231.48" y="423.6" width="5.3" height="7.90" fill="#6c6bb2"/><rect x="270.55" y="409" width="5.3" height="22.50" fill="#6c6bb2"/><rect x="277.06" y="386" width="5.3" height="45.50" fill="#6c6bb2"/><rect x="283.58" y="375" width="5.3" height="56.50" fill="#6c6bb2"/><rect x="290.09" y="427.6" width="5.3" height="3.90" fill="#6c6bb2"/><rect x="296.60" y="428" width="5.3" height="3.50" fill="#6c6bb2"/><rect x="303.11" y="421" width="5.3" height="10.50" fill="#6c6bb2"/><rect x="309.62" y="427" width="5.3" height="4.50" fill="#6c6bb2"/><rect x="316.14" y="428" width="5.3" height="3.50" fill="#6c6bb2"/><rect x="322.65" y="415.4" width="5.3" height="16.10" fill="#6c6bb2"/><rect x="329.16" y="425.6" width="5.3" height="5.90" fill="#6c6bb2"/><rect x="335.68" y="421" width="5.3" height="10.50" fill="#6c6bb2"/><rect x="342.19" y="332.6" width="5.3" height="98.90" fill="#6c6bb2"/><rect x="348.70" y="416" width="5.3" height="15.50" fill="#6c6bb2"/><rect x="355.21" y="349.6" width="5.3" height="81.90" fill="#6c6bb2"/><rect x="368.24" y="397.6" width="5.3" height="33.90" fill="#6c6bb2"/><rect x="374.75" y="353" width="5.3" height="78.50" fill="#6c6bb2"/><rect x="381.26" y="420" width="5.3" height="11.50" fill="#6c6bb2"/><rect x="387.77" y="412.4" width="5.3" height="19.10" fill="#6c6bb2"/><rect x="394.29" y="391" width="5.3" height="40.50" fill="#6c6bb2"/><rect x="400.80" y="409" width="5.3" height="22.50" fill="#6c6bb2"/><rect x="407.31" y="411" width="5.3" height="20.50" fill="#6c6bb2"/><rect x="413.83" y="409" width="5.3" height="22.50" fill="#6c6bb2"/><rect x="420.34" y="419" width="5.3" height="12.50" fill="#6c6bb2"/><rect x="426.85" y="417" width="5.3" height="14.50" fill="#6c6bb2"/><rect x="433.36" y="382" width="5.3" height="49.50" fill="#6c6bb2"/><rect x="439.88" y="398" width="5.3" height="33.50" fill="#6c6bb2"/><rect x="446.39" y="394" width="5.3" height="37.50" fill="#6c6bb2"/><rect x="452.90" y="378" width="5.3" height="53.50" fill="#6c6bb2"/><rect x="459.41" y="411.6" width="5.3" height="19.90" fill="#6c6bb2"/><rect x="465.93" y="384" width="5.3" height="47.50" fill="#6c6bb2"/><rect x="472.44" y="371.6" width="5.3" height="59.90" fill="#6c6bb2"/><rect x="478.95" y="419" width="5.3" height="12.50" fill="#6c6bb2"/><rect x="537.56" y="429" width="5.3" height="2.50" fill="#6c6bb2"/><rect x="557.10" y="425.4" width="5.3" height="6.10" fill="#6c6bb2"/><rect x="563.61" y="430" width="5.3" height="1.50" fill="#6c6bb2"/><rect x="576.64" y="430.5" width="5.3" height="1.00" fill="#6c6bb2"/><rect x="583.15" y="429.2" width="5.3" height="2.30" fill="#6c6bb2"/><rect x="602.69" y="428" width="5.3" height="3.50" fill="#6c6bb2"/><rect x="609.20" y="420" width="5.3" height="11.50" fill="#6c6bb2"/><line x1="140.4" y1="431.5" x2="617.0" y2="431.5" stroke="#666" stroke-width="1"/><line x1="140.40" y1="431.5" x2="140.40" y2="433.5" stroke="#888" stroke-width="0.6"/><line x1="159.99" y1="431.5" x2="159.99" y2="433.5" stroke="#888" stroke-width="0.6"/><line x1="179.57" y1="431.5" x2="179.57" y2="433.5" stroke="#888" stroke-width="0.6"/><line x1="199.16" y1="431.5" x2="199.16" y2="433.5" stroke="#888" stroke-width="0.6"/><line x1="218.75" y1="431.5" x2="218.75" y2="433.5" stroke="#888" stroke-width="0.6"/><line x1="238.33" y1="431.5" x2="238.33" y2="433.5" stroke="#888" stroke-width="0.6"/><line x1="257.92" y1="431.5" x2="257.92" y2="433.5" stroke="#888" stroke-width="0.6"/><line x1="277.50" y1="431.5" x2="277.50" y2="433.5" stroke="#888" stroke-width="0.6"/><line x1="297.09" y1="431.5" x2="297.09" y2="433.5" stroke="#888" stroke-width="0.6"/><line x1="316.68" y1="431.5" x2="316.68" y2="433.5" stroke="#888" stroke-width="0.6"/><line x1="336.26" y1="431.5" x2="336.26" y2="433.5" stroke="#888" stroke-width="0.6"/><line x1="355.85" y1="431.5" x2="355.85" y2="433.5" stroke="#888" stroke-width="0.6"/><line x1="375.44" y1="431.5" x2="375.44" y2="433.5" stroke="#888" stroke-width="0.6"/><line x1="395.02" y1="431.5" x2="395.02" y2="433.5" stroke="#888" stroke-width="0.6"/><line x1="414.61" y1="431.5" x2="414.61" y2="433.5" stroke="#888" stroke-width="0.6"/><line x1="434.19" y1="431.5" x2="434.19" y2="433.5" stroke="#888" stroke-width="0.6"/><line x1="453.78" y1="431.5" x2="453.78" y2="433.5" stroke="#888" stroke-width="0.6"/><line x1="473.37" y1="431.5" x2="473.37" y2="433.5" stroke="#888" stroke-width="0.6"/><line x1="492.95" y1="431.5" x2="492.95" y2="433.5" stroke="#888" stroke-width="0.6"/><line x1="512.54" y1="431.5" x2="512.54" y2="433.5" stroke="#888" stroke-width="0.6"/><line x1="532.13" y1="431.5" x2="532.13" y2="433.5" stroke="#888" stroke-width="0.6"/><line x1="551.71" y1="431.5" x2="551.71" y2="433.5" stroke="#888" stroke-width="0.6"/><line x1="571.30" y1="431.5" x2="571.30" y2="433.5" stroke="#888" stroke-width="0.6"/><line x1="590.88" y1="431.5" x2="590.88" y2="433.5" stroke="#888" stroke-width="0.6"/><line x1="610.47" y1="431.5" x2="610.47" y2="433.5" stroke="#888" stroke-width="0.6"/><clipPath id="cp"><rect x="140.4" y="252.3" width="476.6" height="181.2"/></clipPath><path d="M142.95,423.50 C143.60,423.40 148.16,422.50 149.46,422.50 C150.76,422.85 154.67,426.55 155.97,427.00 C157.28,427.00 161.18,427.00 162.49,427.00 C163.79,427.00 167.70,427.00 169.00,427.00 C170.30,427.00 174.21,427.00 175.51,427.00 C176.81,427.00 180.72,427.00 182.02,427.00 C183.33,427.00 187.23,427.00 188.54,427.00 C189.84,427.00 193.75,427.00 195.05,427.00 C196.35,427.00 200.26,427.00 201.56,427.00 C202.87,427.00 206.77,427.00 208.07,427.00 C209.38,427.00 213.28,427.00 214.59,427.00 C215.89,427.00 219.80,427.00 221.10,427.00 C222.40,427.00 226.31,427.00 227.61,427.00 C228.92,427.00 232.82,427.00 234.12,427.00 C235.43,427.35 239.33,430.15 240.64,430.50 C241.94,430.50 245.85,430.50 247.15,430.50 C248.45,430.50 252.36,430.50 253.66,430.50 C254.97,430.50 258.87,430.50 260.18,430.50 C261.48,430.35 265.38,430.50 266.69,429.00 C267.99,379.95 271.90,-55.70 273.20,-60.00 C274.50,-60.00 278.41,352.90 279.71,386.00 C281.01,386.00 284.92,271.00 286.23,271.00 C287.53,274.50 291.43,405.90 292.74,421.00 C294.04,422.00 297.95,421.90 299.25,422.00 C300.55,422.00 304.46,422.00 305.76,422.00 C307.06,422.00 310.97,422.00 312.27,422.00 C313.58,422.00 317.49,422.00 318.79,422.00 C320.09,422.00 324.00,422.00 325.30,422.00 C326.60,422.00 330.51,422.00 331.81,422.00 C333.12,422.00 337.02,422.00 338.32,422.00 C339.63,407.60 343.53,289.10 344.84,278.00 C346.14,278.00 350.05,304.35 351.35,311.00 C352.65,317.65 356.56,332.40 357.86,344.50 C359.16,356.60 363.07,426.45 364.38,432.00 C365.68,432.00 369.58,405.90 370.89,400.00 C372.19,394.10 376.10,373.00 377.40,373.00 C378.70,375.20 382.61,416.60 383.91,422.00 C385.22,427.00 389.12,426.50 390.42,427.00 C391.73,427.00 395.63,427.00 396.94,427.00 C398.24,427.00 402.15,427.00 403.45,427.00 C404.75,427.00 408.66,427.00 409.96,427.00 C411.26,427.00 415.17,427.00 416.48,427.00 C417.78,427.00 421.69,427.00 422.99,427.00 C424.29,427.00 428.20,427.00 429.50,427.00 C430.80,427.00 434.71,427.00 436.01,427.00 C437.31,427.00 441.22,427.00 442.52,427.00 C443.83,427.00 447.74,427.00 449.04,427.00 C450.34,427.00 454.25,427.00 455.55,427.00 C456.85,427.00 460.76,427.00 462.06,427.00 C463.37,427.00 467.27,427.00 468.57,427.00 C469.88,427.00 473.78,427.00 475.09,427.00 C476.39,427.00 480.30,427.00 481.60,427.00 C482.90,427.00 486.81,427.00 488.11,427.00 C489.42,427.00 493.32,427.00 494.62,427.00 C495.93,427.00 499.83,427.00 501.14,427.00 C502.44,427.00 506.35,427.00 507.65,427.00 C508.95,427.00 512.86,427.00 514.16,427.00 C515.47,427.00 519.37,427.00 520.67,427.00 C521.98,427.00 525.88,427.00 527.19,427.00 C528.49,427.00 532.40,427.00 533.70,427.00 C535.00,427.00 538.91,427.00 540.21,427.00 C541.51,427.00 545.42,427.00 546.73,427.00 C548.03,427.00 551.93,427.00 553.24,427.00 C554.54,426.75 558.45,424.80 559.75,424.50 C561.05,424.20 564.96,424.00 566.26,424.00 C567.57,424.30 571.47,427.50 572.77,427.50 C574.08,427.45 577.99,423.50 579.29,423.50 C580.59,423.50 584.50,427.25 585.80,427.50 C587.10,427.50 591.01,426.45 592.31,426.00 C593.62,425.55 597.52,423.25 598.83,423.00 C600.13,423.00 604.03,423.30 605.34,423.50 C606.64,423.70 611.20,424.85 611.85,425.00" fill="none" stroke="#a8665c" stroke-width="0.75" clip-path="url(#cp)"/><circle cx="142.95" cy="423.5" r="1.1" fill="#fff" stroke="#b87a70" stroke-width="0.5"/><circle cx="162.49" cy="427" r="1.1" fill="#fff" stroke="#b87a70" stroke-width="0.5"/><circle cx="182.02" cy="427" r="1.1" fill="#fff" stroke="#b87a70" stroke-width="0.5"/><circle cx="201.56" cy="427" r="1.1" fill="#fff" stroke="#b87a70" stroke-width="0.5"/><circle cx="221.10" cy="427" r="1.1" fill="#fff" stroke="#b87a70" stroke-width="0.5"/><circle cx="240.64" cy="430.5" r="1.1" fill="#fff" stroke="#b87a70" stroke-width="0.5"/><circle cx="260.18" cy="430.5" r="1.1" fill="#fff" stroke="#b87a70" stroke-width="0.5"/><circle cx="279.71" cy="386" r="1.1" fill="#fff" stroke="#b87a70" stroke-width="0.5"/><circle cx="299.25" cy="422" r="1.1" fill="#fff" stroke="#b87a70" stroke-width="0.5"/><circle cx="318.79" cy="422" r="1.1" fill="#fff" stroke="#b87a70" stroke-width="0.5"/><circle cx="338.32" cy="422" r="1.1" fill="#fff" stroke="#b87a70" stroke-width="0.5"/><circle cx="357.86" cy="344.5" r="1.1" fill="#fff" stroke="#b87a70" stroke-width="0.5"/><circle cx="377.40" cy="373" r="1.1" fill="#fff" stroke="#b87a70" stroke-width="0.5"/><circle cx="396.94" cy="427" r="1.1" fill="#fff" stroke="#b87a70" stroke-width="0.5"/><circle cx="416.48" cy="427" r="1.1" fill="#fff" stroke="#b87a70" stroke-width="0.5"/><circle cx="436.01" cy="427" r="1.1" fill="#fff" stroke="#b87a70" stroke-width="0.5"/><circle cx="455.55" cy="427" r="1.1" fill="#fff" stroke="#b87a70" stroke-width="0.5"/><circle cx="475.09" cy="427" r="1.1" fill="#fff" stroke="#b87a70" stroke-width="0.5"/><circle cx="494.62" cy="427" r="1.1" fill="#fff" stroke="#b87a70" stroke-width="0.5"/><circle cx="514.16" cy="427" r="1.1" fill="#fff" stroke="#b87a70" stroke-width="0.5"/><circle cx="533.70" cy="427" r="1.1" fill="#fff" stroke="#b87a70" stroke-width="0.5"/><circle cx="553.24" cy="427" r="1.1" fill="#fff" stroke="#b87a70" stroke-width="0.5"/><circle cx="572.77" cy="427.5" r="1.1" fill="#fff" stroke="#b87a70" stroke-width="0.5"/><circle cx="592.31" cy="426" r="1.1" fill="#fff" stroke="#b87a70" stroke-width="0.5"/><circle cx="611.85" cy="425" r="1.1" fill="#fff" stroke="#b87a70" stroke-width="0.5"/><rect x="140.5" y="441" width="475.5" height="14" fill="#dfe5ee" stroke="#d2d9e3" stroke-width="0.6"/><path d="M141 454 L200 452 L260 453 L280 448 L300 451 L340 446 L350 450 L380 447 L420 450 L460 448 L500 452 L560 453 L615 452 L615 455 L141 455 Z" fill="#d6dde8"/><rect x="139.8" y="444" width="1.6" height="8" fill="#b8bec8"/><rect x="614.8" y="444" width="1.6" height="8" fill="#b8bec8"/></svg>
<div class="t" style="left:130.39px;top:249.25px;font-size:7.27px;color:#3a3a3a;font-weight:400;transform:scaleX(0.5200);">2000</div>
<div class="t" style="left:618.50px;top:249.25px;font-size:7.27px;color:#3a3a3a;font-weight:400;transform:scaleX(0.4500);">200</div>
<div class="t" style="left:130.39px;top:294.05px;font-size:7.27px;color:#3a3a3a;font-weight:400;transform:scaleX(0.5200);">1500</div>
<div class="t" style="left:618.50px;top:294.05px;font-size:7.27px;color:#3a3a3a;font-weight:400;transform:scaleX(0.4500);">150</div>
<div class="t" style="left:130.39px;top:338.85px;font-size:7.27px;color:#3a3a3a;font-weight:400;transform:scaleX(0.5200);">1000</div>
<div class="t" style="left:618.50px;top:338.85px;font-size:7.27px;color:#3a3a3a;font-weight:400;transform:scaleX(0.4500);">100</div>
<div class="t" style="left:132.49px;top:383.65px;font-size:7.27px;color:#3a3a3a;font-weight:400;transform:scaleX(0.5200);">500</div>
<div class="t" style="left:618.50px;top:383.65px;font-size:7.27px;color:#3a3a3a;font-weight:400;transform:scaleX(0.4500);">50</div>
<div class="t" style="left:136.70px;top:428.45px;font-size:7.27px;color:#3a3a3a;font-weight:400;transform:scaleX(0.5200);">0</div>
<div class="t" style="left:618.50px;top:428.45px;font-size:7.27px;color:#3a3a3a;font-weight:400;transform:scaleX(0.4500);">0</div>
<div class="t" style="left:136.35px;top:435.70px;font-size:5.67px;color:#6a6a6a;font-weight:400;transform:scaleX(0.9296);">00:00</div>
<div class="t" style="left:155.89px;top:435.70px;font-size:5.67px;color:#6a6a6a;font-weight:400;transform:scaleX(0.9296);">01:00</div>
<div class="t" style="left:175.42px;top:435.70px;font-size:5.67px;color:#6a6a6a;font-weight:400;transform:scaleX(0.9296);">02:00</div>
<div class="t" style="left:194.96px;top:435.70px;font-size:5.67px;color:#6a6a6a;font-weight:400;transform:scaleX(0.9296);">03:00</div>
<div class="t" style="left:214.50px;top:435.70px;font-size:5.67px;color:#6a6a6a;font-weight:400;transform:scaleX(0.9296);">04:00</div>
<div class="t" style="left:234.04px;top:435.70px;font-size:5.67px;color:#6a6a6a;font-weight:400;transform:scaleX(0.9296);">05:00</div>
<div class="t" style="left:253.58px;top:435.70px;font-size:5.67px;color:#6a6a6a;font-weight:400;transform:scaleX(0.9296);">06:00</div>
<div class="t" style="left:273.11px;top:435.70px;font-size:5.67px;color:#6a6a6a;font-weight:400;transform:scaleX(0.9296);">07:00</div>
<div class="t" style="left:292.65px;top:435.70px;font-size:5.67px;color:#6a6a6a;font-weight:400;transform:scaleX(0.9296);">08:00</div>
<div class="t" style="left:312.19px;top:435.70px;font-size:5.67px;color:#6a6a6a;font-weight:400;transform:scaleX(0.9296);">09:00</div>
<div class="t" style="left:331.72px;top:435.70px;font-size:5.67px;color:#6a6a6a;font-weight:400;transform:scaleX(0.9296);">10:00</div>
<div class="t" style="left:351.26px;top:435.70px;font-size:5.67px;color:#6a6a6a;font-weight:400;transform:scaleX(0.9583);">11:00</div>
<div class="t" style="left:370.80px;top:435.70px;font-size:5.67px;color:#6a6a6a;font-weight:400;transform:scaleX(0.9296);">12:00</div>
<div class="t" style="left:390.34px;top:435.70px;font-size:5.67px;color:#6a6a6a;font-weight:400;transform:scaleX(0.9296);">13:00</div>
<div class="t" style="left:409.88px;top:435.70px;font-size:5.67px;color:#6a6a6a;font-weight:400;transform:scaleX(0.9296);">14:00</div>
<div class="t" style="left:429.41px;top:435.70px;font-size:5.67px;color:#6a6a6a;font-weight:400;transform:scaleX(0.9296);">15:00</div>
<div class="t" style="left:448.95px;top:435.70px;font-size:5.67px;color:#6a6a6a;font-weight:400;transform:scaleX(0.9296);">16:00</div>
<div class="t" style="left:468.49px;top:435.70px;font-size:5.67px;color:#6a6a6a;font-weight:400;transform:scaleX(0.9296);">17:00</div>
<div class="t" style="left:488.02px;top:435.70px;font-size:5.67px;color:#6a6a6a;font-weight:400;transform:scaleX(0.9296);">18:00</div>
<div class="t" style="left:507.56px;top:435.70px;font-size:5.67px;color:#6a6a6a;font-weight:400;transform:scaleX(0.9296);">19:00</div>
<div class="t" style="left:527.10px;top:435.70px;font-size:5.67px;color:#6a6a6a;font-weight:400;transform:scaleX(0.9296);">20:00</div>
<div class="t" style="left:546.64px;top:435.70px;font-size:5.67px;color:#6a6a6a;font-weight:400;transform:scaleX(0.9296);">21:00</div>
<div class="t" style="left:566.17px;top:435.70px;font-size:5.67px;color:#6a6a6a;font-weight:400;transform:scaleX(0.9296);">22:00</div>
<div class="t" style="left:585.71px;top:435.70px;font-size:5.67px;color:#6a6a6a;font-weight:400;transform:scaleX(0.9296);">23:00</div>
<div class="t" style="left:605.25px;top:435.70px;font-size:5.67px;color:#6a6a6a;font-weight:400;transform:scaleX(0.9296);">24:00</div>
<svg class="r" style="left:661px;top:227px" width="14" height="7"><circle cx="2.5" cy="3" r="2" fill="none" stroke="#777" stroke-width="0.7"/><path d="M8 6 V3.5 L10 2 L12 3.5 V6" fill="none" stroke="#777" stroke-width="0.7"/></svg>
<div class="r" style="left:685.2px;top:227px;width:6.4px;height:5.2px;background:#74c8bc;border-radius:1px;"></div>
<div class="t" style="left:693.20px;top:227.28px;font-size:5.81px;color:#555555;font-weight:400;transform:scaleX(0.5500);">Daytime Activities</div>
<div class="r" style="left:723.3px;top:227px;width:6.4px;height:5.2px;background:#5cbde2;border-radius:1px;"></div>
<div class="t" style="left:731.30px;top:227.28px;font-size:5.81px;color:#555555;font-weight:400;transform:scaleX(0.5500);">Evening Activities</div>
<div class="r" style="left:760.4px;top:227px;width:6.4px;height:5.2px;background:#7d5bb3;border-radius:1px;"></div>
<div class="t" style="left:768.40px;top:227.28px;font-size:5.81px;color:#555555;font-weight:400;transform:scaleX(0.5500);">Night Activities</div>
<svg class="r" style="left:707.8px;top:232.3px" width="60" height="100" viewBox="-30 -50 60 100"><g transform="scale(0.554,1)"><circle r="42.4" fill="none" stroke="#74c8bc" stroke-width="8.4"/><circle r="35.35" fill="none" stroke="#5cbde2" stroke-width="5.9"/><circle r="29" fill="none" stroke="#7d5bb3" stroke-width="7"/></g></svg>
<div class="t" style="left:730.00px;top:276.23px;font-size:13.08px;color:#3f8cbd;font-weight:400;transform:scaleX(0.4987);-webkit-text-stroke:0.25px #3f8cbd;">100%</div>
<div class="t" style="left:731.30px;top:301.57px;font-size:5.23px;color:#888888;font-weight:400;transform:scaleX(0.5500);">Activities</div>
<div class="r" style="left:692.4px;top:344.5px;width:6.4px;height:5.2px;background:#74c8bc;border-radius:1px;"></div>
<div class="t" style="left:700.40px;top:344.78px;font-size:5.81px;color:#555555;font-weight:400;transform:scaleX(0.5500);">Daytime Lights</div>
<div class="r" style="left:725.2px;top:344.5px;width:6.4px;height:5.2px;background:#5cbde2;border-radius:1px;"></div>
<div class="t" style="left:733.20px;top:344.78px;font-size:5.81px;color:#555555;font-weight:400;transform:scaleX(0.5500);">Evening Lights</div>
<div class="r" style="left:758.5px;top:344.5px;width:6.4px;height:5.2px;background:#7d5bb3;border-radius:1px;"></div>
<div class="t" style="left:766.50px;top:344.78px;font-size:5.81px;color:#555555;font-weight:400;transform:scaleX(0.5500);">Night Lights</div>
<svg class="r" style="left:708.2px;top:350.4px" width="60" height="100" viewBox="-30 -50 60 100"><g transform="scale(0.554,1)"><circle r="42.4" fill="none" stroke="#74c8bc" stroke-width="8.4"/><circle r="35.35" fill="none" stroke="#5cbde2" stroke-width="5.9"/><circle r="29" fill="none" stroke="#7d5bb3" stroke-width="7"/></g></svg>
<div class="t" style="left:730.40px;top:394.33px;font-size:13.08px;color:#3f8cbd;font-weight:400;transform:scaleX(0.4987);-webkit-text-stroke:0.25px #3f8cbd;">100%</div>
<div class="t" style="left:731.70px;top:419.67px;font-size:5.23px;color:#888888;font-weight:400;transform:scaleX(0.5500);">Lights</div>
<div class="card" style="left:76.4px;top:478.2px;width:901.1px;height:298.3px;"></div>
<div class="t" style="left:81.00px;top:490.31px;font-size:8.14px;color:#222222;font-weight:700;transform:scaleX(0.5333);">NIGHT</div>
<div class="t" style="left:96.00px;top:491.59px;font-size:6.40px;color:#9a9a9a;font-weight:400;transform:scaleX(0.4089);">Sleep hypnogram</div>
<div class="r" style="left:80px;top:506px;width:895px;height:1px;background:#e8e8e8;"></div>
<svg class="r" style="left:0;top:0" width="1000" height="1000"><rect x="83" y="516.2" width="125.00" height="93.30" fill="#545c61"/><rect x="208" y="516.2" width="6.30" height="93.30" fill="#4876c4"/><rect x="214.3" y="516.2" width="138.50" height="93.30" fill="#545c61"/><rect x="352.8" y="516.2" width="6.80" height="93.30" fill="#4876c4"/><rect x="359.6" y="516.2" width="239.20" height="93.30" fill="#545c61"/><rect x="598.8" y="516.2" width="8.80" height="93.30" fill="#4876c4"/><rect x="607.6" y="516.2" width="298.70" height="93.30" fill="#bebebe"/><rect x="906.3" y="516.2" width="10.70" height="93.30" fill="#4876c4"/><rect x="917" y="516.2" width="41.00" height="93.30" fill="#bebebe"/><rect x="958" y="516.2" width="14.00" height="93.30" fill="#4876c4"/><rect x="628.8" y="516.2" width="7" height="93.30" fill="#b9bcc0"/><rect x="733.5" y="516.2" width="1.2" height="93.30" fill="#4a6aa8"/><rect x="750" y="516.2" width="4.2" height="93.30" fill="#e0344a"/><rect x="779" y="516.2" width="1.2" height="93.30" fill="#4a6aa8"/></svg>
<svg class="r" style="left:82px;top:611px" width="6" height="7"><path d="M4 1 A2.6 2.6 0 1 0 5 5.5 A2 2 0 0 1 4 1 Z" fill="#333"/></svg>
<div class="t" style="left:88.00px;top:612.07px;font-size:5.23px;color:#444444;font-weight:400;transform:scaleX(0.5500);">8:30</div>
<div class="t" style="left:958.50px;top:610.77px;font-size:5.23px;color:#555555;font-weight:400;transform:scaleX(0.6485);">07:38</div>
<svg class="r" style="left:967px;top:609.5px" width="6" height="8"><path d="M3.2 1 Q5 3.5 3.5 6.5 M3 3 L1.5 5.5" fill="none" stroke="#222" stroke-width="0.9"/></svg>
<div class="card" style="left:81.1px;top:633px;width:292.5px;height:61.5px;"></div>
<div class="t" style="left:86.10px;top:641.40px;font-size:14.53px;color:#62a9b8;font-weight:400;transform:scaleX(0.5650);">8hrs. 4mins</div>
<div class="t" style="left:85.60px;top:658.59px;font-size:6.40px;color:#8c8c8c;font-weight:400;transform:scaleX(0.5350);">SLEEP TIME (8H~10 RECOMMENDED)</div>
<svg class="r" style="left:360.6px;top:640px" width="10" height="12"><path d="M5 2 A4 4.5 0 1 0 8.6 4.2" fill="none" stroke="#d4d4d4" stroke-width="0.8"/><path d="M6.5 0.8 L5 2 L6.5 3.4" fill="none" stroke="#d4d4d4" stroke-width="0.8"/></svg>
<div class="r" style="left:85.89999999999999px;top:675px;width:283.1px;height:1.6px;background:#eeeeee;"></div>
<div class="r" style="left:85.89999999999999px;top:675px;width:283.1px;height:1.8px;background:#4a9c9c;"></div>
<div class="t" style="left:362.74px;top:681.97px;font-size:5.23px;color:#888888;font-weight:400;transform:scaleX(0.5500);">80%</div>
<div class="card" style="left:381.4px;top:633px;width:292.80000000000007px;height:61.5px;"></div>
<div class="t" style="left:386.40px;top:641.40px;font-size:14.53px;color:#62a9b8;font-weight:400;transform:scaleX(0.5650);">3hrs. 27mins</div>
<div class="t" style="left:385.90px;top:658.59px;font-size:6.40px;color:#8c8c8c;font-weight:400;transform:scaleX(0.5350);">SHALLOW SLEEP</div>
<svg class="r" style="left:661.2px;top:640px" width="10" height="12"><path d="M5 2 A4 4.5 0 1 0 8.6 4.2" fill="none" stroke="#d4d4d4" stroke-width="0.8"/><path d="M6.5 0.8 L5 2 L6.5 3.4" fill="none" stroke="#d4d4d4" stroke-width="0.8"/></svg>
<div class="r" style="left:386.2px;top:675px;width:283.4px;height:1.6px;background:#eeeeee;"></div>
<div class="r" style="left:386.2px;top:675px;width:119.03px;height:1.8px;background:#4a9c9c;"></div>
<div class="t" style="left:663.34px;top:681.97px;font-size:5.23px;color:#888888;font-weight:400;transform:scaleX(0.5500);">42%</div>
<div class="card" style="left:682.5px;top:633px;width:291.5px;height:61.5px;"></div>
<div class="t" style="left:687.50px;top:641.40px;font-size:14.53px;color:#62a9b8;font-weight:400;transform:scaleX(0.5650);">4hrs. 34mins</div>
<div class="t" style="left:687.00px;top:658.59px;font-size:6.40px;color:#8c8c8c;font-weight:400;transform:scaleX(0.5350);">DEEP SLEEP (NORMAL: 2H~4H)</div>
<svg class="r" style="left:961px;top:640px" width="10" height="12"><path d="M5 2 A4 4.5 0 1 0 8.6 4.2" fill="none" stroke="#d4d4d4" stroke-width="0.8"/><path d="M6.5 0.8 L5 2 L6.5 3.4" fill="none" stroke="#d4d4d4" stroke-width="0.8"/></svg>
<div class="r" style="left:687.3px;top:675px;width:282.1px;height:1.6px;background:#eeeeee;"></div>
<div class="r" style="left:687.3px;top:675px;width:157.98px;height:1.8px;background:#4a9c9c;"></div>
<div class="t" style="left:963.14px;top:681.97px;font-size:5.23px;color:#888888;font-weight:400;transform:scaleX(0.5500);">56%</div>
<div class="card" style="left:81.1px;top:704.2px;width:292.5px;height:56.799999999999955px;"></div>
<div class="t" style="left:86.10px;top:712.60px;font-size:14.53px;color:#62a9b8;font-weight:400;transform:scaleX(0.5650);">6times</div>
<div class="t" style="left:85.60px;top:729.79px;font-size:6.40px;color:#8c8c8c;font-weight:400;transform:scaleX(0.5350);">AVG. TOSS &amp; TURNS (ABNORMAL: 8 TIMES)</div>
<svg class="r" style="left:360.6px;top:711.2px" width="10" height="12"><path d="M5 2 A4 4.5 0 1 0 8.6 4.2" fill="none" stroke="#d4d4d4" stroke-width="0.8"/><path d="M6.5 0.8 L5 2 L6.5 3.4" fill="none" stroke="#d4d4d4" stroke-width="0.8"/></svg>
<div class="card" style="left:381.4px;top:704.2px;width:292.80000000000007px;height:56.799999999999955px;"></div>
<div class="t" style="left:386.40px;top:712.60px;font-size:14.53px;color:#cc5a52;font-weight:400;transform:scaleX(0.5650);">2mins(1times)</div>
<div class="t" style="left:385.90px;top:729.79px;font-size:6.40px;color:#8c8c8c;font-weight:400;transform:scaleX(0.5350);">AWAKE (ABNORMAL: 1~2)</div>
<svg class="r" style="left:661.2px;top:711.2px" width="10" height="12"><path d="M5 2 A4 4.5 0 1 0 8.6 4.2" fill="none" stroke="#d4d4d4" stroke-width="0.8"/><path d="M6.5 0.8 L5 2 L6.5 3.4" fill="none" stroke="#d4d4d4" stroke-width="0.8"/></svg>
<div class="card" style="left:76.6px;top:790px;width:900.9px;height:220px;"></div>
<div class="t" style="left:81.00px;top:801.76px;font-size:7.85px;color:#222222;font-weight:700;transform:scaleX(0.5141);">SLEEP COGNITIVE BEHAVIORAL PLAN</div>
<div class="r" style="left:80px;top:817px;width:896px;height:1px;background:#ececec;"></div>
<div class="r" style="left:80px;top:869px;width:444px;height:1px;background:#f3f3f3;"></div>
<div class="r" style="left:80px;top:913px;width:444px;height:1px;background:#f3f3f3;"></div>
<div class="r" style="left:80px;top:958.5px;width:444px;height:1px;background:#f3f3f3;"></div>
<div class="r" style="left:526px;top:870px;width:450px;height:1px;background:#f3f3f3;"></div>
<div class="r" style="left:526px;top:913px;width:450px;height:1px;background:#f3f3f3;"></div>
<svg class="r" style="left:83px;top:832px" width="16" height="30" viewBox="0 0 16 30"><g transform="scale(0.55,1)"><ellipse cx="13" cy="3" rx="3" ry="2.4" fill="none" stroke="#2a2a2a" stroke-width="1.5"/><path d="M12 6 Q7 8 5 13 L4 16 Q6 17 8 15 L9 12 L10 17 Q6 22 4 25 Q6 28 8 27 L12 20 L14 27 Q16 28 17 27 L16 19 L15 12 L20 14 Q23 13 21 10 L15 7 Z" fill="none" stroke="#2a2a2a" stroke-width="1.5"/></g></svg>
<div class="t" style="left:104.20px;top:833.35px;font-size:9.16px;color:#262626;font-weight:400;transform:scaleX(0.6189);">Daytime Activities</div>
<div class="t" style="left:104.00px;top:849.36px;font-size:6.54px;color:#4a4a4a;font-weight:400;transform:scaleX(0.5906);">The amount of daytime activity yesterday was sufficient. We maintain or increase the amount of activity today as yesterday.</div>
<svg class="r" style="left:83px;top:876.5px" width="16" height="30" viewBox="0 0 16 30"><g transform="scale(0.55,1)"><ellipse cx="14" cy="13.5" rx="7" ry="7.3" fill="none" stroke="#2a2a2a" stroke-width="1.5"/><path d="M14 1 V4.5 M14 22.5 V26 M1 13.5 H4 M24 13.5 H27 M4.5 5 L7.5 7.5 M23.5 5 L20.5 7.5 M4.5 22 L7.5 19.5 M23.5 22 L20.5 19.5" stroke="#2a2a2a" stroke-width="1.5"/></g></svg>
<div class="t" style="left:104.20px;top:877.15px;font-size:9.16px;color:#262626;font-weight:400;transform:scaleX(0.6042);">Daytime Lights</div>
<div class="t" style="left:104.00px;top:893.16px;font-size:6.54px;color:#4a4a4a;font-weight:400;transform:scaleX(0.5580);">The amount of daytime sunlight yesterday was sufficient. Continue to maintain or increase the amount of sunlight today as yesterday.</div>
<svg class="r" style="left:83px;top:920px" width="16" height="30" viewBox="0 0 16 30"><g transform="scale(0.55,1)"><ellipse cx="14" cy="3.5" rx="3.5" ry="3" fill="none" stroke="#2a2a2a" stroke-width="1.5"/><path d="M9 9 Q14 7.5 19 9 Q21 13 24 16 Q25 19 22 18 L19 15 L19 20 M9 9 Q7 13 4 16 Q3 19 6 18 L9 15 L9 20 M4 22 Q14 18 24 22 Q25 25 14 25 Q3 25 4 22 Z" fill="none" stroke="#2a2a2a" stroke-width="1.5"/></g></svg>
<div class="t" style="left:104.20px;top:921.95px;font-size:9.16px;color:#262626;font-weight:400;transform:scaleX(0.6178);">Night Activities</div>
<div class="t" style="left:104.00px;top:937.96px;font-size:6.54px;color:#4a4a4a;font-weight:400;transform:scaleX(0.5767);">Yesterday night time activity was adequate for a deep sleep. Keep it today as well.</div>
<svg class="r" style="left:83px;top:963px" width="16" height="30" viewBox="0 0 16 30"><g transform="scale(0.55,1)"><path d="M17 1 Q2 5 1 16 Q1 27 13 29 Q23 28 27 16 L26 13 Q24 23 17 22 Q10 20 10 12 Q11 5 17 1 Z" fill="none" stroke="#2a2a2a" stroke-width="1.5"/></g></svg>
<div class="t" style="left:104.20px;top:964.95px;font-size:9.16px;color:#262626;font-weight:400;transform:scaleX(0.5957);">Night Lights</div>
<div class="t" style="left:104.00px;top:980.96px;font-size:6.54px;color:#4a4a4a;font-weight:400;transform:scaleX(0.5708);">Yesterday night time lighting was adequate for a deep sleep. Keep it today as well.</div>
<svg class="r" style="left:533px;top:832px" width="16" height="30" viewBox="0 0 16 30"><g transform="scale(0.55,1)"><ellipse cx="14" cy="13.6" rx="13.2" ry="13" fill="none" stroke="#2a2a2a" stroke-width="1.5"/><path d="M12.5 4 V15.5 L19 18" fill="none" stroke="#2a2a2a" stroke-width="1.5"/></g></svg>
<div class="t" style="left:553.50px;top:833.85px;font-size:9.16px;color:#262626;font-weight:400;transform:scaleX(0.6240);">Sleep time</div>
<div class="t" style="left:553.50px;top:849.86px;font-size:6.54px;color:#4a4a4a;font-weight:400;transform:scaleX(0.5974);">The adequate sleep time for the member age. Today, please keep the amount of sunlight and exercise as yesterday.</div>
<svg class="r" style="left:533px;top:876px" width="16" height="30" viewBox="0 0 16 30"><g transform="scale(0.55,1)"><path d="M19 0.8 L7.5 16.5 L15 15.5 L9.5 27.5 L22.5 10.8 L15 11.8 Z" fill="none" stroke="#2a2a2a" stroke-width="1.5" stroke-linejoin="miter"/></g></svg>
<div class="t" style="left:553.50px;top:876.95px;font-size:9.16px;color:#262626;font-weight:400;transform:scaleX(0.6156);">Avg. toss &amp; turns</div>
<div class="t" style="left:553.50px;top:892.96px;font-size:6.54px;color:#4a4a4a;font-weight:400;transform:scaleX(0.5932);">Frequency of tossing and turning during normal sleep. Keep the amount of sunlight and activity as yesterday.</div>
<svg class="r" style="left:533px;top:920px" width="16" height="30" viewBox="0 0 16 30"><g transform="scale(0.55,1)"><path d="M19 0.8 L7.5 16.5 L15 15.5 L9.5 27.5 L22.5 10.8 L15 11.8 Z" fill="none" stroke="#2a2a2a" stroke-width="1.5" stroke-linejoin="miter"/></g></svg>
<div class="t" style="left:553.50px;top:921.35px;font-size:9.16px;color:#262626;font-weight:400;transform:scaleX(0.6293);">Awake</div>
<div class="t" style="left:553.50px;top:937.36px;font-size:6.54px;color:#4a4a4a;font-weight:400;transform:scaleX(0.5917);">Frequency of being awakened during normal sleep. Keep the amount of sunlight and activity as yesterday.</div></body></html>
